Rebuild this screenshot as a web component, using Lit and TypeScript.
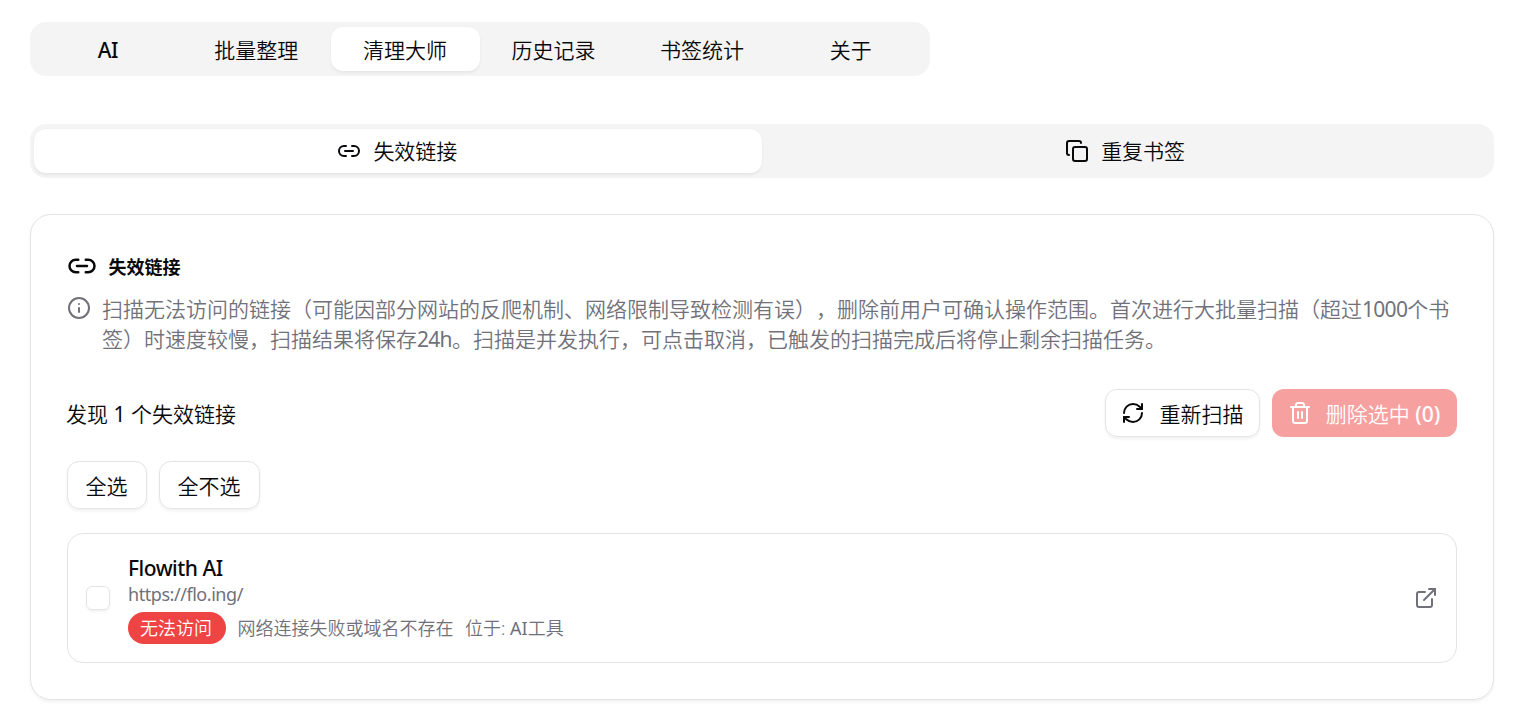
import { LitElement, html, svg, css } from "lit";
import { customElement, property, state } from "lit/decorators.js";

const ICONS: Record<string, unknown> = {
  link: svg`<path d="M9 17H7A5 5 0 0 1 7 7h2"/><path d="M15 7h2a5 5 0 1 1 0 10h-2"/><line x1="8" x2="16" y1="12" y2="12"/>`,
  copy: svg`<rect width="14" height="14" x="8" y="8" rx="2" ry="2"/><path d="M4 16c-1.1 0-2-.9-2-2V4c0-1.1.9-2 2-2h10c1.1 0 2 .9 2 2"/>`,
  info: svg`<circle cx="12" cy="12" r="10"/><path d="M12 16v-4"/><path d="M12 8h.01"/>`,
  refresh: svg`<path d="M3 12a9 9 0 0 1 9-9 9.75 9.75 0 0 1 6.74 2.74L21 8"/><path d="M21 3v5h-5"/><path d="M21 12a9 9 0 0 1-9 9 9.75 9.75 0 0 1-6.74-2.74L3 16"/><path d="M8 16H3v5"/>`,
  trash: svg`<path d="M3 6h18"/><path d="M19 6v14c0 1-1 2-2 2H7c-1 0-2-1-2-2V6"/><path d="M8 6V4c0-1 1-2 2-2h4c1 0 2 1 2 2v2"/><line x1="10" x2="10" y1="11" y2="17"/><line x1="14" x2="14" y1="11" y2="17"/>`,
  external: svg`<path d="M15 3h6v6"/><path d="M10 14 21 3"/><path d="M18 13v6a2 2 0 0 1-2 2H5a2 2 0 0 1-2-2V8a2 2 0 0 1 2-2h6"/>`,
};

@customElement("ui-icon")
export class UiIcon extends LitElement {
  @property() name = "";
  static styles = css`
    :host { display: block; width: 24px; height: 24px; flex: none; }
    .glyph {
      display: block; width: 100%; height: 100%; fill: none; stroke: currentColor;
      stroke-width: 2; stroke-linecap: round; stroke-linejoin: round;
    }
  `;
  render() {
    return html`<svg class="glyph" viewBox="0 0 24 24">${ICONS[this.name]}</svg>`;
  }
}

@customElement("app-root")
export class AppRoot extends LitElement {
  @state() tab = 2;
  @state() section = 0;

  private tabs = ["AI", "批量整理", "清理大师", "历史记录", "书签统计", "关于"];
  private sections = [
    { icon: "link", label: "失效链接" },
    { icon: "copy", label: "重复书签" },
  ];

  static styles = css`
    :host {
      display: block; box-sizing: border-box; height: 720px; overflow: hidden;
      padding: 22px 24px 0 30px; background: #fff; color: #09090b;
      font-family: "Noto Sans", "Noto Sans CJK SC", sans-serif;
      font-size: 21px; line-height: 30px; font-weight: 350;
      text-spacing-trim: space-all;
    }
    * { box-sizing: border-box; }
    button { font: inherit; color: inherit; margin: 0; border: 0; background: none; white-space: nowrap; }
    .tabs { display: grid; height: 54px; padding: 4.5px 4.5px 5px 4px; border-radius: 16px; background: #f4f4f5; }
    .main { width: 900px; grid-template-columns: repeat(6, 1fr); }
    .sub { margin-top: 48px; grid-template-columns: 1fr 1fr; }
    .tab {
      display: flex; align-items: center; justify-content: center; gap: 12px;
      padding: 0 1px 0 0; border-radius: 12px;
    }
    .label { padding-top: 2px; }
    .sub .label { padding-top: 1px; }
    .tab.on { background: #fff; box-shadow: 0 1.5px 3px rgba(0, 0, 0, .06); }
    .latin { font-weight: 500; letter-spacing: -.5px; }
    .card {
      margin-top: 36px; height: 486px; padding: 36px; border: 1px solid #e4e4e7;
      border-radius: 21px; box-shadow: 0 1.5px 3px rgba(0, 0, 0, .06);
    }
    .title {
      display: flex; align-items: center; gap: 11.5px; height: 30px; margin: 0;
      font-size: 18px; font-weight: 700;
    }
    .title span { padding-top: 1px; }
    .title ui-icon { width: 30px; height: 30px; }
    .note { display: flex; gap: 11px; margin: 13px 0 0; color: #71717a; }
    .note ui-icon { margin-top: 2px; }
    .digits { font-weight: 400; letter-spacing: -.7px; }
    .regular { font-weight: 400; }
    .bar { display: flex; align-items: center; gap: 12px; margin-top: 35px; }
    .found { flex: 1; padding-top: 1px; margin-left: -1px; }
    .btn {
      display: flex; align-items: center; justify-content: center; height: 48px;
      padding: 1px 0 0; border: 1px solid #e4e4e7; border-radius: 12px;
      box-shadow: 0 1.5px 3px rgba(0, 0, 0, .06);
    }
    .btn ui-icon { margin-top: -2px; }
    .scan { width: 155px; gap: 15px; padding-right: 1px; }
    .danger {
      width: 185px; gap: 14px; border: 0; color: #fff; background: #ef4444;
      opacity: .5; box-shadow: none; padding-right: 1px;
    }
    .danger .latin { letter-spacing: 0; font-weight: 500; }
    .picks { display: flex; gap: 12px; margin-top: 24px; }
    .all { width: 80px; padding-right: 1px; }
    .none { width: 101px; padding-right: 1px; }
    .item {
      display: flex; align-items: center; height: 130px; margin-top: 24px;
      padding: 0 18px; border: 1px solid #e4e4e7; border-radius: 16px;
    }
    .check {
      width: 24px; height: 24px; margin: 0; appearance: none; border: 1px solid #e4e4e7;
      border-radius: 6px; box-shadow: 0 1.5px 3px rgba(0, 0, 0, .05);
    }
    .body { flex: 1; padding: 2px 0 0 18px; }
    .name { font-weight: 500; line-height: 28px; letter-spacing: -.5px; }
    .url { font-size: 18px; line-height: 24px; color: #71717a; font-weight: 400; letter-spacing: -.45px; }
    .meta { display: flex; align-items: center; gap: 12px; margin-top: 6px; font-size: 18px; color: #71717a; }
    .meta .txt { margin-left: -.5px; }
    .badge {
      height: 32px; padding: 0 12px; line-height: 33px; border-radius: 16px;
      background: #ef4444; color: #fff; width: 98px; white-space: nowrap;
    }
    .open { padding: 0; color: #71717a; }
  `;

  render() {
    return html`
      <nav class="tabs main">
        ${this.tabs.map(
          (t, i) => html`<button class="tab ${i === this.tab ? "on" : ""} ${i === 0 ? "latin" : ""}"
            @click=${() => (this.tab = i)}><span class="label">${t}</span></button>`
        )}
      </nav>
      <nav class="tabs sub">
        ${this.sections.map(
          (s, i) => html`<button class="tab ${i === this.section ? "on" : ""}"
            @click=${() => (this.section = i)}><ui-icon name=${s.icon}></ui-icon><span class="label">${s.label}</span></button>`
        )}
      </nav>
      <section class="card">
        <h3 class="title"><ui-icon name="link"></ui-icon><span>失效链接</span></h3>
        <p class="note">
          <ui-icon name="info"></ui-icon>
          <span>扫描无法访问的链接（可能因部分网站的反爬机制、网络限制导致检测有误），删除前用户可确认操作范围。首次进行大批量扫描（超过<span class="digits">1000</span>个书签）时速度较慢，扫描结果将保存<span class="digits">24h</span>。扫描是并发执行，可点击取消，已触发的扫描完成后将停止剩余扫描任务。</span>
        </p>
        <div class="bar">
          <span class="found">发现 <span class="regular">1</span> 个失效链接</span>
          <button class="btn scan"><ui-icon name="refresh"></ui-icon><span>重新扫描</span></button>
          <button class="btn danger" disabled><ui-icon name="trash"></ui-icon><span>删除选中 <span class="latin">(0)</span></span></button>
        </div>
        <div class="picks">
          <button class="btn all">全选</button>
          <button class="btn none">全不选</button>
        </div>
        <article class="item">
          <input class="check" type="checkbox" />
          <div class="body">
            <div class="name">Flowith AI</div>
            <div class="url">https://flo.ing/</div>
            <div class="meta"><span class="badge">无法访问</span><span class="txt">网络连接失败或域名不存在</span><span class="txt">位于: <span class="regular">AI</span>工具</span></div>
          </div>
          <button class="open"><ui-icon name="external"></ui-icon></button>
        </article>
      </section>
    `;
  }
}
